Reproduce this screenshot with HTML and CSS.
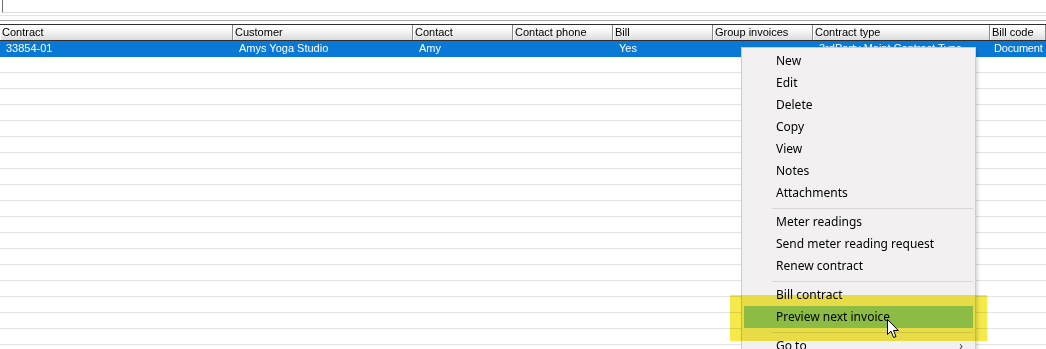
FILE: index.html
```html
<!DOCTYPE html>
<html>
<head>
  <meta charset="UTF-8">
  <title>Contracts</title>
  <link rel="stylesheet" href="styles.css">
</head>
<body>
  <div class="window">
    <div class="search"></div>
    <div class="toolbar-gap"></div>

    <div class="grid">
      <div class="row head">
        <div class="cell">Contract</div>
        <div class="cell">Customer</div>
        <div class="cell">Contact</div>
        <div class="cell">Contact phone</div>
        <div class="cell">Bill</div>
        <div class="cell">Group invoices</div>
        <div class="cell">Contract type</div>
        <div class="cell">Bill code</div>
      </div>
      <div class="row selected">
        <div class="cell">33854-01</div>
        <div class="cell">Amys Yoga Studio</div>
        <div class="cell">Amy</div>
        <div class="cell"></div>
        <div class="cell">Yes</div>
        <div class="cell"></div>
        <div class="cell">3rdParty Maint Contract Type</div>
        <div class="cell last">Document</div>
      </div>
      <div class="row"></div>
      <div class="row"></div>
      <div class="row"></div>
      <div class="row"></div>
      <div class="row"></div>
      <div class="row"></div>
      <div class="row"></div>
      <div class="row"></div>
      <div class="row"></div>
      <div class="row"></div>
      <div class="row"></div>
      <div class="row"></div>
      <div class="row"></div>
      <div class="row"></div>
      <div class="row"></div>
      <div class="row"></div>
      <div class="row"></div>
      <div class="row"></div>
      <div class="row"></div>
    </div>

    <!-- right-click menu -->
    <div class="menu">
      <div class="item">New</div>
      <div class="item">Edit</div>
      <div class="item">Delete</div>
      <div class="item">Copy</div>
      <div class="item">View</div>
      <div class="item">Notes</div>
      <div class="item">Attachments</div>
      <div class="sep"></div>
      <div class="item">Meter readings</div>
      <div class="item">Send meter reading request</div>
      <div class="item">Renew contract</div>
      <div class="sep"></div>
      <div class="item">Bill contract</div>
      <div class="item hover">Preview next invoice</div>
      <div class="sep"></div>
      <div class="item sub">Go to <span class="arrow">&#8250;</span></div>
    </div>

    <div class="marker"></div>

    <svg class="cursor" width="13" height="20" viewBox="0 0 13 20">
      <path d="M0.5 0.5 L0.5 15.5 L4 12.2 L6.6 18.5 L9 17.5 L6.5 11.5 L11.3 11.5 Z" fill="#fff" stroke="#000" stroke-width="1"/>
    </svg>
  </div>
</body>
</html>
```

FILE: styles.css
```css
body {
  margin: 0;
  background-color: #fff;
  font-family: "Liberation Sans", Arial, sans-serif;
  font-size: 11px;
  color: #000;
}
.window {
  position: relative;
  width: 1046px;
  height: 349px;
  overflow: hidden;
}
.search {
  height: 12px;
  margin-left: 2px;
  border-left: 1px solid #707070;
  border-bottom: 1px solid #dedede;
}
.toolbar-gap {
  height: 4px;
  margin-top: 2px;
  border-top: 1px solid #e4e4e4;
  border-bottom: 1px solid #a8a8a8;
}
.grid {
  margin-top: 3px;
}
.row {
  display: grid;
  grid-template-columns: 233px 180px 100px 100px 100px 100px 177px 1fr;
  height: 15px;
  border-bottom: 1px solid #e3e3e3;
}
.cell {
  padding-left: 6px;
  line-height: 15px;
  white-space: nowrap;
  overflow: hidden;
}
.cell.last {
  padding-left: 4px;
  overflow: visible;
  letter-spacing: -0.2px;
}
.head {
  height: 15px;
  border-top: 1px solid #2e2e2e;
  border-bottom: 1px solid #2e2e2e;
  background: linear-gradient(#ffffff, #f4f4f4 45%, #dcdcdc);
}
.head .cell {
  padding-left: 2px;
  border-right: 1px solid #8a8a8a;
  box-shadow: inset 1px 0 #fff;
}
.selected {
  background-color: #0a78d7;
  border-bottom-color: #0a78d7;
  color: #fff;
}
.menu {
  position: absolute;
  left: 741px;
  top: 47px;
  width: 233px;
  height: 320px;
  padding: 2px 0 0;
  background-color: #f2f0f0;
  border: 1px solid #cccccc;
  box-shadow: 2px 2px 3px rgba(0, 0, 0, 0.15);
  font-family: "Noto Sans", "Open Sans", sans-serif;
  font-size: 12px;
  color: #000;
}
.item {
  position: relative;
  height: 22px;
  line-height: 22px;
  margin: 0 2px;
  padding-left: 32px;
}
.item.hover {
  background-color: #93cde8;
}
.arrow {
  position: absolute;
  right: 10px;
  color: #444;
}
.sep {
  height: 1px;
  margin: 4px 2px 2px 30px;
  background-color: #d7d7d7;
}
.marker {
  position: absolute;
  left: 730px;
  top: 295px;
  width: 257px;
  height: 46px;
  background-color: #f5ea4a;
  mix-blend-mode: multiply;
}
.cursor {
  position: absolute;
  left: 887px;
  top: 319px;
}
```
